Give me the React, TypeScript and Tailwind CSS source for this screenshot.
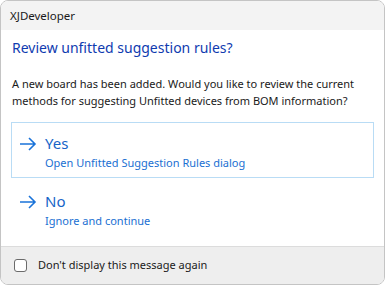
import { useState } from "react";

function Arrow() {
  return (
    <svg width="18" height="14" viewBox="0 0 18 14" fill="none" className="shrink-0">
      <path d="M1 7h15M10 1l6 6-6 6" stroke="#1a73d9" strokeWidth="1.6" />
    </svg>
  );
}

function CommandLink({
  title,
  note,
  active,
}: {
  title: string;
  note: string;
  active?: boolean;
}) {
  return (
    <div
      className={`h-[56px] border pl-[7px] pt-[10px] ${
        active ? "border-[#b9dcf5]" : "border-transparent"
      }`}
    >
      <div className="flex items-center gap-[8px] h-[21px]">
        <Arrow />
        <span className="text-[15px] leading-[21px] text-[#1664c8]">{title}</span>
      </div>
      <div className="pl-[26px] text-[11px] leading-[17px] text-[#1a6fd2]">{note}</div>
    </div>
  );
}

export default function App() {
  const [checked, setChecked] = useState(false);

  return (
    <div
      className="w-[385px] h-[285px] bg-white flex flex-col border border-[#c4c4c4] rounded-[8px] overflow-hidden text-[#1a1a1a]"
      style={{ fontFamily: '"Noto Sans", "Open Sans", sans-serif' }}
    >
      <div className="h-[29px] shrink-0 bg-[#f3f3f3] flex items-center pl-[9px] text-[11.5px]">
        XJDeveloper
      </div>
      <div className="flex-1 px-[10px] pt-[7px]">
        <h1 className="text-[14px] leading-[22px] text-[#0f3bb0] pl-[1px]">
          Review unfitted suggestion rules?
        </h1>
        <p className="mt-[16px] text-[11px] leading-[17px] pl-[1px]">
          A new board has been added. Would you like to review the current methods for
          suggesting Unfitted devices from BOM information?
        </p>
        <div className="mt-[13px] flex flex-col gap-[2px]">
          <CommandLink title="Yes" note="Open Unfitted Suggestion Rules dialog" active />
          <CommandLink title="No" note="Ignore and continue" />
        </div>
      </div>
      <div className="h-[38px] shrink-0 bg-[#eeeeee] border-t border-[#dcdcdc] flex items-center pl-[13px] gap-[11px] text-[11px]">
        <button
          onClick={() => setChecked(!checked)}
          className="w-[13px] h-[13px] rounded-[3px] border border-[#6b6b6b] bg-white"
        />
        <span>Don't display this message again</span>
      </div>
    </div>
  );
}
